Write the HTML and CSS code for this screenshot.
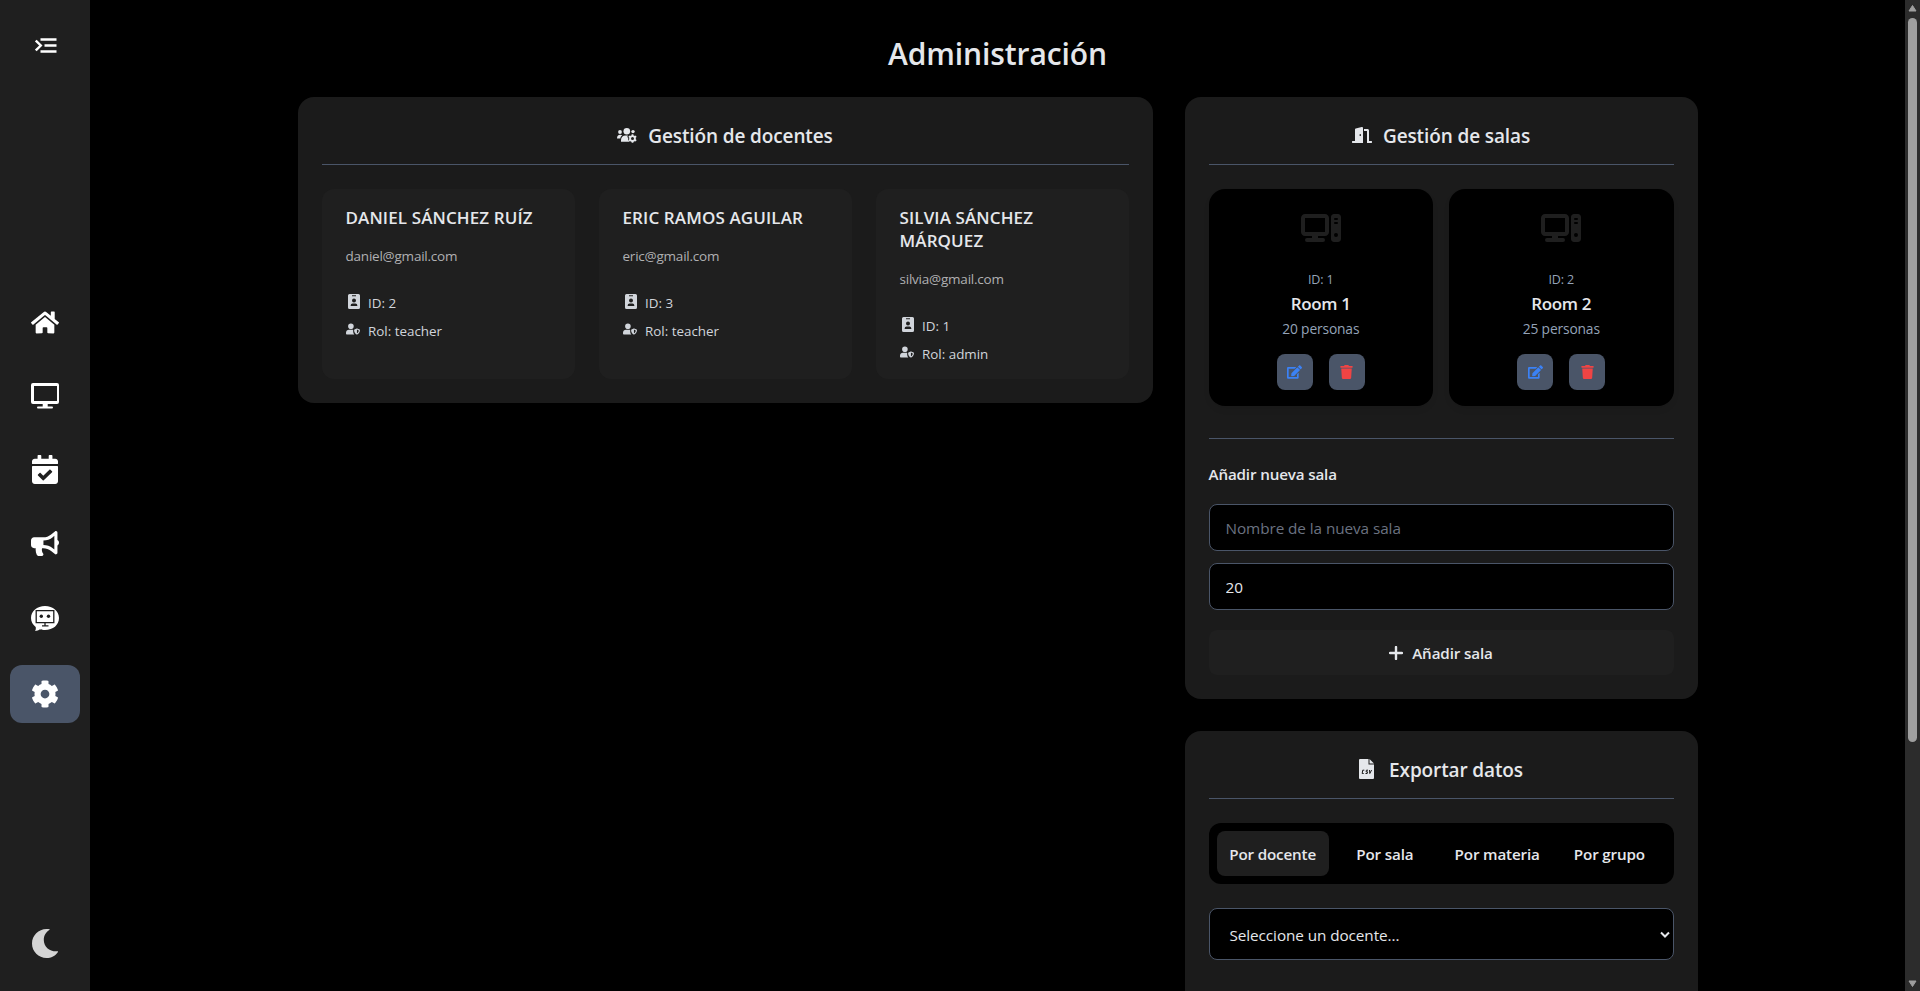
FILE: index.html
```
<!DOCTYPE html>
<html lang="es">
<head>
<meta charset="utf-8">
<title>Administración</title>
<link rel="stylesheet" href="styles.css">
</head>
<body>
<svg class="defs" width="0" height="0">
  <symbol id="badge" viewBox="0 0 12 15"><path fill-rule="evenodd" d="M1.5 0h9A1.5 1.5 0 0 1 12 1.500v12a1.500 1.500 0 0 1-1.500 1.500h-9A1.500 1.500 0 0 1 0 13.500v-12A1.500 1.500 0 0 1 1.500 0zM4 1.300v1h4v-1zM6 4.600a2 2 0 1 0 0 4 2 2 0 0 0 0-4zM4.500 9.500A1.800 1.800 0 0 0 2.700 11.300v.7h6.600v-.7A1.800 1.800 0 0 0 7.500 9.500z"/></symbol>
  <symbol id="shield" viewBox="0 0 640 512"><path fill-rule="evenodd" d="M224 256A128 128 0 1 0 224 0a128 128 0 0 0 0 256zM134 288C60 288 0 348 0 422v42c0 26 21 48 48 48h334c-40-44-54-100-54-164v-52c-10-5-24-8-40-8zM622 276l-110-45c-8-3-16-3-24 0l-100 45c-11 5-18 15-18 27 0 112 67 182 118 207 8 3 16 3 24 0 50-20 128-84 128-207 0-12-7-22-18-27zM500 450V284l84 35c-4 65-40 108-84 131z"/></symbol>
  <symbol id="computer" viewBox="0 0 640 512"><path fill-rule="evenodd" d="M64 32C28.700 32 0 60.700 0 96v224c0 35.300 28.700 64 64 64h112v32H96a32 32 0 0 0 0 64h256a32 32 0 0 0 0-64h-80v-32h112c35.300 0 64-28.700 64-64V96c0-35.300-28.700-64-64-64zM64 96h320v224H64zM528 32c-26.500 0-48 21.500-48 48v352c0 26.500 21.500 48 48 48h64c26.500 0 48-21.500 48-48V80c0-26.500-21.500-48-48-48zm16 64h32a16 16 0 0 1 0 32h-32a16 16 0 0 1 0-32zm0 64h32a16 16 0 0 1 0 32h-32a16 16 0 0 1 0-32zm16 176a32 32 0 1 1 0 64 32 32 0 0 1 0-64z"/></symbol>
  <symbol id="edit" viewBox="0 0 576 512"><path d="M402.600 83.200l90.200 90.200c3.800 3.800 3.800 10 0 13.800L274.400 405.600l-92.800 10.300c-12.400 1.400-22.900-9.100-21.500-21.500l10.300-92.800L388.800 83.200c3.800-3.800 10-3.800 13.800 0zm162-22.900l-48.800-48.800c-15.200-15.200-39.900-15.200-55.200 0l-35.400 35.400c-3.800 3.800-3.800 10 0 13.800l90.200 90.200c3.800 3.800 10 3.800 13.800 0l35.400-35.400c15.200-15.300 15.200-40 0-55.200zM384 346.200V448H64V128h229.800c3.200 0 6.200-1.300 8.500-3.500l40-40c7.600-7.600 2.200-20.500-8.500-20.500H48C21.500 64 0 85.500 0 112v352c0 26.500 21.500 48 48 48h352c26.500 0 48-21.500 48-48V306.200c0-10.700-12.900-16-20.500-8.500l-40 40c-2.200 2.300-3.500 5.300-3.500 8.500z"/></symbol>
  <symbol id="trash" viewBox="0 0 448 512"><path d="M432 32H312l-9.400-18.700A24 24 0 0 0 281.100 0H166.800a23.720 23.720 0 0 0-21.400 13.300L136 32H16A16 16 0 0 0 0 48v32a16 16 0 0 0 16 16h416a16 16 0 0 0 16-16V48a16 16 0 0 0-16-16zM53.200 467a48 48 0 0 0 47.900 45h245.800a48 48 0 0 0 47.900-45L416 128H32z"/></symbol>
</svg>
<div class="app">
  <nav class="sidebar">
    <button class="toggle"><svg width="22" height="16" viewBox="0 0 22 16"><path d="M5.500 1.500h16M9.500 7.500h12M5.500 13.500h16" stroke="currentColor" stroke-width="2.400" fill="none"/><path d="M.8 2.500l5 5-5 5" stroke="currentColor" stroke-width="2.400" fill="none"/></svg></button>
    <div class="menu">
      <a class="item"><svg width="28" height="25" viewBox="0 0 576 512"><path d="M280.370 148.260L96 300.110V464a16 16 0 0 0 16 16l112.060-.29a16 16 0 0 0 15.920-16V368a16 16 0 0 1 16-16h64a16 16 0 0 1 16 16v95.640a16 16 0 0 0 16 16.050L464 480a16 16 0 0 0 16-16V300L295.670 148.260a12.190 12.190 0 0 0-15.300 0zM571.600 251.470L488 182.560V44.050a12 12 0 0 0-12-12h-56a12 12 0 0 0-12 12v72.610L318.470 43a48 48 0 0 0-61 0L4.340 251.470a12 12 0 0 0-1.600 16.900l25.500 31A12 12 0 0 0 45.150 301l235.220-193.740a12.190 12.190 0 0 1 15.300 0L530.900 301a12 12 0 0 0 16.900-1.600l25.500-31a12 12 0 0 0-1.700-16.930z"/></svg></a>
      <a class="item raised"><svg width="28" height="26" viewBox="0 0 28 26"><path fill-rule="evenodd" d="M2 0h24a2 2 0 0 1 2 2v17a2 2 0 0 1-2 2h-9.300v2.500h4.300a1 1 0 0 1 1 1 1 1 0 0 1-1 1H7a1 1 0 0 1-1-1 1 1 0 0 1 1-1h4.700V21H2a2 2 0 0 1-2-2V2a2 2 0 0 1 2-2zM3 3v15h23V3z"/></svg></a>
      <a class="item raised"><svg width="26" height="29" viewBox="0 0 448 512" preserveAspectRatio="none"><path d="M436 160H12c-6.627 0-12-5.373-12-12v-36c0-26.510 21.490-48 48-48h48V12c0-6.627 5.373-12 12-12h40c6.627 0 12 5.373 12 12v52h128V12c0-6.627 5.373-12 12-12h40c6.627 0 12 5.373 12 12v52h48c26.510 0 48 21.490 48 48v36c0 6.627-5.373 12-12 12zM12 192h424c6.627 0 12 5.373 12 12v260c0 26.510-21.490 48-48 48H48c-26.510 0-48-21.490-48-48V204c0-6.627 5.373-12 12-12zm333.296 95.947l-28.169-28.398c-4.667-4.705-12.265-4.736-16.970-.068L194.120 364.665l-45.980-46.352c-4.667-4.705-12.266-4.736-16.971-.068l-28.397 28.170c-4.705 4.667-4.736 12.265-.068 16.970l82.601 83.269c4.667 4.705 12.265 4.736 16.970.068l142.953-141.805c4.705-4.667 4.736-12.265.068-16.970z"/></svg></a>
      <a class="item raised"><svg width="28" height="25" viewBox="0 0 576 512"><path d="M576 240c0-23.630-12.950-44.040-32-55.120V32.010C544 23.260 537.020 0 512 0c-7.120 0-14.190 2.380-19.980 7.020l-85.030 68.030C364.280 109.190 310.660 128 256 128H64c-35.350 0-64 28.650-64 64v96c0 35.350 28.650 64 64 64h33.700c-1.390 10.480-2.180 21.140-2.180 32 0 39.770 9.260 77.350 25.560 110.940 5.190 10.690 16.520 17.060 28.400 17.060h74.280c26.050 0 41.690-29.840 25.900-50.560-16.400-21.520-26.150-48.360-26.150-77.440 0-11.110 1.620-21.790 4.410-32H256c54.660 0 108.280 18.810 150.980 52.950l85.030 68.030a32.023 32.023 0 0 0 19.980 7.020c24.920 0 32-22.780 32-32V295.130C563.050 284.040 576 263.630 576 240zm-96 141.420l-33.050-26.440C392.950 311.780 325.120 288 256 288v-96c69.120 0 136.950-23.780 190.950-66.980L480 98.580v282.840z"/></svg></a>
      <a class="item"><svg width="28" height="25" viewBox="0 0 28 25"><path d="M14 0c8 0 14 5 14 12s-6 12-14 12c-2 0-3.500-.2-5-.8C7.500 24.200 6 24.800 4 25c.8-1 1-2.500.7-4C1.700 18.600 0 15.600 0 12 0 5 6 0 14 0z"/><path class="cut" d="M5.200 4.600h17.600v12H5.200zM14 16.600v3M11 19.800h6.500" /><circle class="dot" cx="10.300" cy="10.300" r="1.700"/><circle class="dot" cx="17.500" cy="10.300" r="1.700"/></svg></a>
      <a class="item active"><svg width="28" height="28" viewBox="0 0 512 512"><path d="M487.400 315.700l-42.600-24.600c4.300-23.200 4.300-47 0-70.200l42.600-24.600c4.900-2.800 7.100-8.600 5.500-14-11.100-35.600-30-67.800-54.700-94.600-3.800-4.100-10-5.100-14.800-2.300L380.800 110c-17.900-15.400-38.500-27.300-60.800-35.100V25.800c0-5.600-3.900-10.500-9.400-11.700-36.700-8.200-74.300-7.800-109.200 0-5.500 1.200-9.400 6.100-9.400 11.700V75c-22.200 7.900-42.800 19.800-60.800 35.100L88.700 85.500c-4.900-2.800-11-1.900-14.800 2.300-24.700 26.700-43.600 58.900-54.700 94.600-1.700 5.400.6 11.200 5.500 14L67.300 221c-4.300 23.200-4.300 47 0 70.200l-42.600 24.600c-4.900 2.800-7.100 8.600-5.500 14 11.100 35.600 30 67.800 54.700 94.600 3.800 4.100 10 5.100 14.800 2.300l42.600-24.600c17.900 15.400 38.500 27.300 60.800 35.100v49.200c0 5.600 3.900 10.500 9.400 11.700 36.700 8.200 74.300 7.800 109.200 0 5.500-1.200 9.400-6.100 9.400-11.700v-49.200c22.200-7.900 42.800-19.800 60.800-35.100l42.600 24.600c4.900 2.800 11 1.900 14.800-2.300 24.700-26.700 43.600-58.900 54.700-94.600 1.500-5.500-.7-11.300-5.600-14.100zM256 336c-44.100 0-80-35.900-80-80s35.900-80 80-80 80 35.900 80 80-35.900 80-80 80z"/></svg></a>
    </div>
    <button class="theme"><svg width="26" height="29" viewBox="0 0 26 29"><path d="M14.500 0C16 0 17 .1 18 .5 14 2.800 11.800 6.600 11.800 11c0 7 6 12 13.900 11.300.5 0 .4.500.1.900C23.300 26.800 19.200 29 14.500 29 6.500 29 0 22.500 0 14.500S6.500 0 14.500 0z"/></svg></button>
  </nav>
  <main class="main">
    <h1 class="title">Administración</h1>
    <div class="grid">
      <section class="card">
        <h2 class="head"><svg width="20" height="16" viewBox="0 0 20 16"><circle cx="3" cy="5" r="1.900"/><circle cx="9.800" cy="4.200" r="3.300"/><circle cx="16" cy="4.600" r="1.700"/><path d="M0 11.500C0 9 1.200 7.800 3 7.800c1 0 1.800.3 2.300.8C4 9.300 3.500 10.300 3.300 11.500z"/><path d="M4 14.800v-1.500C4 10.300 5.800 8.600 8.500 8.600h2.400l-.6 1.500 1 .9-.2 1.800 1.300 2z"/><path class="gear" d="M15.500 7.200v8.600M11.800 9.300l7.400 4.400M11.800 13.700l7.400-4.400"/><circle cx="15.500" cy="11.500" r="2.500" fill="none" stroke="currentColor" stroke-width="1.700"/><circle class="hole" cx="15.500" cy="11.500" r="1.500"/></svg><span>Gestión de docentes</span></h2>
        <div class="teachers">
          <article class="teacher">
            <h3>DANIEL SÁNCHEZ RUÍZ</h3>
            <p class="mail">daniel@gmail.com</p>
            <p class="meta first"><svg class="ib"><use href="#badge"/></svg><span>ID: 2</span></p>
            <p class="meta"><svg class="is"><use href="#shield"/></svg><span>Rol: teacher</span></p>
          </article>
          <article class="teacher">
            <h3>ERIC RAMOS AGUILAR</h3>
            <p class="mail">eric@gmail.com</p>
            <p class="meta first"><svg class="ib"><use href="#badge"/></svg><span>ID: 3</span></p>
            <p class="meta"><svg class="is"><use href="#shield"/></svg><span>Rol: teacher</span></p>
          </article>
          <article class="teacher">
            <h3>SILVIA SÁNCHEZ MÁRQUEZ</h3>
            <p class="mail">silvia@gmail.com</p>
            <p class="meta first"><svg class="ib"><use href="#badge"/></svg><span>ID: 1</span></p>
            <p class="meta"><svg class="is"><use href="#shield"/></svg><span>Rol: admin</span></p>
          </article>
        </div>
      </section>
      <div class="side">
        <section class="card">
          <h2 class="head"><svg width="20" height="16" viewBox="0 0 640 512"><path d="M624 448h-80V113.450C544 86.190 522.470 64 496 64H384v64h96v384h144c8.840 0 16-7.160 16-16v-32c0-8.840-7.160-16-16-16zM312.240 1.010l-192 49.740C105.990 54.440 96 67.700 96 82.920V448H16c-8.840 0-16 7.160-16 16v32c0 8.840 7.160 16 16 16h336V33.180c0-21.580-19.560-37.410-39.760-32.170zM264 288c-13.250 0-24-14.330-24-32s10.750-32 24-32 24 14.330 24 32-10.750 32-24 32z"/></svg><span>Gestión de salas</span></h2>
          <div class="rooms">
            <article class="room">
              <svg class="pc"><use href="#computer"/></svg>
              <p class="rid">ID: 1</p>
              <h3>Room 1</h3>
              <p class="cap">20 personas</p>
              <div class="acts"><button class="act edit"><svg width="15" height="14"><use href="#edit"/></svg></button><button class="act del"><svg width="13" height="14"><use href="#trash"/></svg></button></div>
            </article>
            <article class="room">
              <svg class="pc"><use href="#computer"/></svg>
              <p class="rid">ID: 2</p>
              <h3>Room 2</h3>
              <p class="cap">25 personas</p>
              <div class="acts"><button class="act edit"><svg width="15" height="14"><use href="#edit"/></svg></button><button class="act del"><svg width="13" height="14"><use href="#trash"/></svg></button></div>
            </article>
          </div>
          <form class="add">
            <h4>Añadir nueva sala</h4>
            <input class="field" type="text" placeholder="Nombre de la nueva sala">
            <input class="field num" type="text" value="20">
            <button class="submit" type="button"><svg width="14" height="14" viewBox="0 0 14 14"><path d="M7 1v12M1 7h12" stroke="currentColor" stroke-width="2.400" stroke-linecap="round"/></svg><span>Añadir sala</span></button>
          </form>
        </section>
        <section class="card export">
          <h2 class="head csv"><svg width="15" height="20" viewBox="0 0 15 20"><path d="M1 0h8.500v5.500H15V19a1 1 0 0 1-1 1H1a1 1 0 0 1-1-1V1a1 1 0 0 1 1-1z"/><path d="M10.500 0L15 4.500h-4.500z"/><path class="letters" d="M5.300 11.200H3.700l-.5 3.300h1.500M9 11.200H7.400l-.3 1.600h1.400l-.3 1.700H6.500M10.500 11l.3 3.500L12.600 11"/></svg><span>Exportar datos</span></h2>
          <div class="tabs">
            <button class="tab on">Por docente</button>
            <button class="tab">Por sala</button>
            <button class="tab">Por materia</button>
            <button class="tab">Por grupo</button>
          </div>
          <div class="select"><span>Seleccione un docente...</span><svg width="10" height="8" viewBox="0 0 10 8"><path d="M1 1.500l4 4 4-4" fill="none" stroke="currentColor" stroke-width="2"/></svg></div>
        </section>
      </div>
    </div>
  </main>
  <div class="scrollbar">
    <svg width="9" height="7" viewBox="0 0 9 7"><path d="M4.500.5L8 6H1z" stroke="currentColor" stroke-linejoin="round"/></svg>
    <div class="thumb"></div>
    <svg class="down" width="9" height="7" viewBox="0 0 9 7"><path d="M4.500 6.500L8 1H1z" stroke="currentColor" stroke-linejoin="round"/></svg>
  </div>
</div>
</body>
</html>
```
FILE: styles.css
```
* { box-sizing: border-box; margin: 0; padding: 0; }
body { background: #000; color: #e5e7eb; font-family: "Open Sans", "Noto Sans", sans-serif; overflow: hidden; }
button, input { border: 0; background: none; font: inherit; color: inherit; }
svg { fill: currentColor; flex: none; display: block; }
.defs { position: absolute; }
.app { display: flex; height: 991px; overflow: hidden; }

.sidebar { width: 90px; background: #1f1f1f; color: #fff; display: flex; flex-direction: column; align-items: center; padding: 38px 0 33px; }
.toggle { padding-left: 2px; }
.menu { display: flex; flex-direction: column; gap: 16px; margin-top: 241px; }
.item { width: 70px; height: 58px; border-radius: 12px; display: flex; align-items: center; justify-content: center; padding-bottom: 3px; }
.raised { padding-bottom: 5px; }
.active { background: #4a5568; padding-bottom: 0; }
.cut { fill: none; stroke: #1f1f1f; stroke-width: 1.3; }
.dot { fill: #1f1f1f; }
.theme { margin-top: auto; color: #d4d4d4; }

.main { flex: 1; padding-top: 34px; }
.title { font-size: 30px; font-weight: 600; line-height: 40px; letter-spacing: -.1px; text-align: center; margin-bottom: 23px; }
.grid { width: 1400px; margin: 0 auto; display: grid; grid-template-columns: 855px 513px; gap: 32px; align-items: start; }
.side { display: flex; flex-direction: column; gap: 32px; }
.card { background: #1b1b1b; border-radius: 16px; padding: 24px; }
.head { height: 44px; padding-top: 2px; border-bottom: 1px solid #4a5568; margin-bottom: 24px; display: flex; justify-content: center; gap: 11px; font-size: 19px; font-weight: 600; line-height: 26px; letter-spacing: -.12px; }
.head svg { margin-top: 4px; }
.csv { gap: 15px; }
.csv svg { margin-top: 2px; }
.gear { stroke: currentColor; stroke-width: 1.8; fill: none; }
.hole { fill: #1b1b1b; }
.letters { fill: none; stroke: #1b1b1b; stroke-width: 1; }

.teachers { display: grid; grid-template-columns: repeat(3, 253px); gap: 24px; }
.teacher { background: #1f1f1f; border-radius: 12px; padding: 17px 24px 15px; }
.teacher h3 { font-size: 17px; font-weight: 600; line-height: 23px; letter-spacing: .12px; }
.mail { margin-top: 17px; font-size: 13.5px; line-height: 20px; letter-spacing: -.22px; color: #b0b0b2; }
.meta { margin-top: 8px; font-size: 13.4px; line-height: 20px; color: #d1d5db; display: flex; gap: 8.5px; }
.first { margin-top: 27px; }
.ib { width: 12px; height: 15px; margin: 1px 0 0 2px; }
.is { width: 14px; height: 12px; margin-top: 2px; }

.rooms { display: grid; grid-template-columns: 1fr 1fr; gap: 16px; }
.room { background: #000; border-radius: 16px; padding: 23px 16px 16px; display: flex; flex-direction: column; align-items: center; box-shadow: 0 4px 6px rgba(0, 0, 0, .06); }
.pc { width: 40px; height: 32px; color: #1f1f1f; }
.rid { margin-top: 27px; font-size: 12.5px; line-height: 18px; letter-spacing: -.1px; color: #94a3b8; }
.room h3 { margin-top: 3px; font-size: 17px; font-weight: 600; line-height: 24px; letter-spacing: -.35px; }
.cap { margin-top: 3px; font-size: 13.8px; line-height: 20px; letter-spacing: -.15px; color: #94a3b8; }
.acts { margin-top: 15px; display: flex; gap: 16px; }
.act { width: 36px; height: 36px; border-radius: 8px; background: #4a5568; display: flex; align-items: center; justify-content: center; }
.edit { color: #3b82f6; }
.del { color: #ef4444; }

.add { margin-top: 32px; border-top: 1px solid #4a5568; padding-top: 24px; }
.add h4 { font-size: 15.2px; font-weight: 600; line-height: 22px; letter-spacing: -.15px; margin-bottom: 19px; }
.field { display: block; width: 100%; height: 47px; border: 1px solid #4a5568; border-radius: 8px; background: #000; padding: 0 16px; font-size: 15.3px; letter-spacing: -.07px; }
.num { margin-top: 12px; }
.field::placeholder { color: #6b7280; }
.submit { margin-top: 20px; width: 100%; height: 45px; border-radius: 8px; background: #1f1f1f; display: flex; align-items: center; justify-content: center; gap: 9px; font-size: 15.2px; font-weight: 600; letter-spacing: -.12px; }

.export { height: 400px; }
.tabs { background: #000; border-radius: 12px; padding: 8px; display: grid; grid-template-columns: repeat(4, 1fr); }
.tab { height: 45px; padding-top: 1px; border-radius: 8px; font-size: 15.2px; font-weight: 600; letter-spacing: -.16px; white-space: nowrap; }
.on { background: #1f1f1f; }
.select { margin-top: 24px; height: 52px; border: 1px solid #4a5568; border-radius: 8px; background: #000; display: flex; align-items: center; justify-content: space-between; padding: 1px 3px 0 20px; font-size: 15.3px; letter-spacing: -.08px; }

.scrollbar { width: 15px; background: #2c2c2c; color: #9f9f9f; display: flex; flex-direction: column; align-items: center; padding: 5px 0 4px; }
.thumb { width: 9px; height: 724px; margin-top: 6px; border-radius: 5px; background: #9f9f9f; }
.down { margin-top: auto; }
```
